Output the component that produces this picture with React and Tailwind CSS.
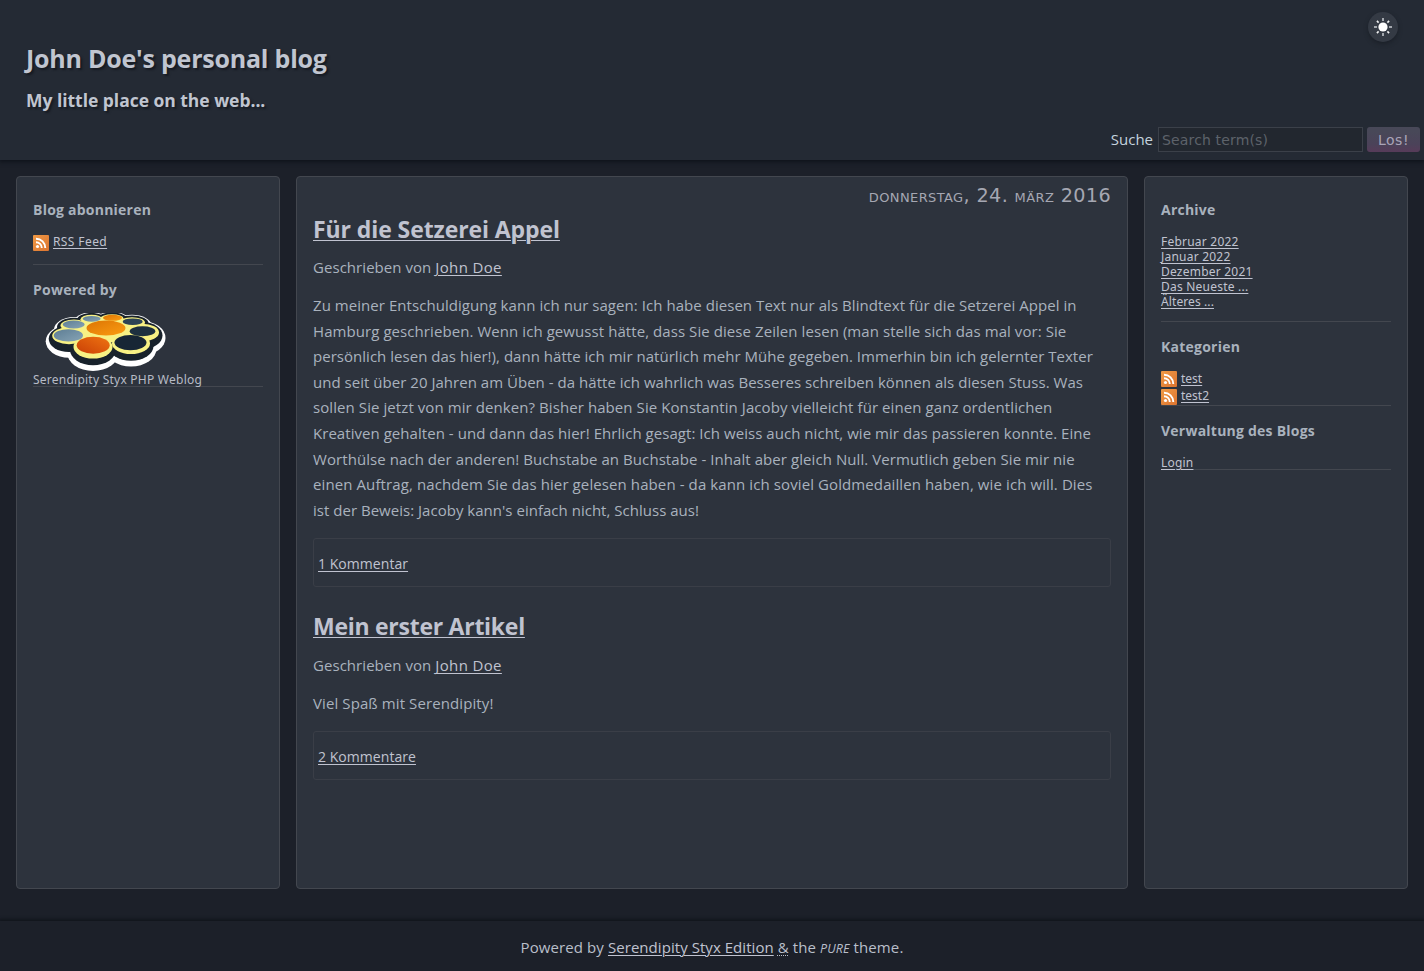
import React from "react";

const bodyFont = "font-['Open_Sans','Noto_Sans',sans-serif]";
const sideFont = "font-['Noto_Sans',sans-serif]";
const uiFont = "font-['DejaVu_Sans',sans-serif]";

function RssIcon() {
  return (
    <svg className="block h-4 w-4 shrink-0" viewBox="0 0 16 16">
      <defs>
        <linearGradient id="rss" x1="0" y1="0" x2="1" y2="1">
          <stop offset="0" stopColor="#f09a45" />
          <stop offset="1" stopColor="#dc7430" />
        </linearGradient>
      </defs>
      <rect width="16" height="16" rx="1" fill="url(#rss)" />
      <circle cx="4.5" cy="11.5" r="1.6" fill="#fff" />
      <path d="M3 7.2a5.8 5.8 0 0 1 5.8 5.8M3 3.7a9.3 9.3 0 0 1 9.3 9.3" fill="none" stroke="#fff" strokeWidth="1.9" />
    </svg>
  );
}

// x, y, rx, ry of each yellow petal, then the depth of the dark edge below it
const petals = [
  [46.5, 6.3, 11, 4.6, 2],
  [67, 5.5, 11.5, 4.2, 2],
  [87, 9.5, 13, 5.2, 3],
  [29, 12.5, 13.5, 6, 4],
  [97.5, 19.5, 16.5, 8.8, 7],
  [24, 22.8, 16.8, 8.5, 7],
  [86, 30.5, 19, 10.5, 6],
  [48, 34, 19.5, 11.5, 6],
];

function StyxLogo() {
  return (
    <svg className="block h-[59px] w-[122px]" viewBox="0 0 122 59">
      <defs>
        <linearGradient id="blue" x1="0" y1="0" x2="1" y2="1">
          <stop offset="0" stopColor="#5d7d94" />
          <stop offset="1" stopColor="#87a4b5" />
        </linearGradient>
        <linearGradient id="orange" x1="0" y1="0" x2="1" y2="1">
          <stop offset="0" stopColor="#dc7404" />
          <stop offset="1" stopColor="#fb9d12" />
        </linearGradient>
        <linearGradient id="red" x1="0" y1="1" x2="1" y2="0">
          <stop offset="0" stopColor="#c93f06" />
          <stop offset="1" stopColor="#ef7411" />
        </linearGradient>
        <clipPath id="logo"><rect width="122" height="59" /></clipPath>
      </defs>
      <g clipPath="url(#logo)">
        <g fill="#fff">
          {petals.map(([x, y, rx, ry, d]) => (
            <ellipse key={x} cx={x} cy={y + (d + 4) / 2} rx={rx + 6.5} ry={ry + (d + 9) / 2} />
          ))}
        </g>
        <g fill="#18222b">
          {petals.map(([x, y, rx, ry, d]) => (
            <ellipse key={x} cx={x} cy={y + (d - 1) / 2} rx={rx + 3.5} ry={ry + (d + 2.6) / 2} />
          ))}
          <ellipse cx="60" cy="26" rx="40" ry="16" />
        </g>
        <g fill="#f7f184">
          {petals.map(([x, y, rx, ry]) => <ellipse key={x} cx={x} cy={y} rx={rx} ry={ry} />)}
          <ellipse cx="62" cy="17" rx="30" ry="12.5" />
        </g>
        <ellipse cx="61" cy="15" rx="19.5" ry="7.6" fill="url(#orange)" />
        <ellipse cx="67.5" cy="4.8" rx="9.5" ry="3" fill="url(#orange)" />
        <ellipse cx="46.7" cy="5.8" rx="9" ry="2.9" fill="url(#blue)" />
        <ellipse cx="28.7" cy="11.5" rx="11" ry="4" fill="url(#blue)" />
        <ellipse cx="23.4" cy="22.4" rx="14.6" ry="6.2" fill="url(#blue)" />
        <ellipse cx="87.7" cy="8.7" rx="10" ry="3.3" fill="#2c4355" />
        <ellipse cx="97.5" cy="18.3" rx="12.8" ry="5" fill="#1d303f" />
        <ellipse cx="85.5" cy="29.6" rx="16" ry="7.6" fill="#172635" />
        <ellipse cx="48.2" cy="32.3" rx="16.5" ry="8.5" fill="url(#red)" />
      </g>
    </svg>
  );
}

function SunIcon() {
  return (
    <svg className="block h-[18px] w-[18px]" viewBox="0 0 18 18">
      <circle cx="9" cy="9" r="4.6" fill="#fff" />
      <path d="M9 0v3M9 15v3M0 9h3M15 9h3" stroke="#a4a8ae" strokeWidth="2" />
      <path d="M2.9 2.9l1.7 1.7M13.4 13.4l1.7 1.7M2.9 15.1l1.7-1.7M13.4 4.6l1.7-1.7" stroke="#f1f2f3" strokeWidth="1.6" />
    </svg>
  );
}

function Link({ children, className = "" }) {
  return (
    <a href="#" className={"text-[#c0c3d0] underline decoration-1 underline-offset-2 " + className} onClick={(e) => e.preventDefault()}>
      {children}
    </a>
  );
}

function Heading({ children, className = "" }) {
  return <h3 className={"h-5 whitespace-nowrap text-[14px] font-bold leading-5 tracking-[0.23px] text-[#a9b2bd] " + className}>{children}</h3>;
}

function Panel({ children, className = "" }) {
  return (
    <div className={"h-[713px] rounded-[4px] border border-[#43474f] bg-[#2d333d] px-4 " + className}>{children}</div>
  );
}

const lines = [
  ["Zu meiner Entschuldigung kann ich nur sagen: Ich habe diesen Text nur als Blindtext für die Setzerei Appel in", "tracking-[0.05px]"],
  ["Hamburg geschrieben. Wenn ich gewusst hätte, dass Sie diese Zeilen lesen (man stelle sich das mal vor: Sie", "tracking-[0.07px]"],
  ["persönlich lesen das hier!), dann hätte ich mir natürlich mehr Mühe gegeben. Immerhin bin ich gelernter Texter", "tracking-[0.027px]"],
  ["und seit über 20 Jahren am Üben - da hätte ich wahrlich was Besseres schreiben können als diesen Stuss. Was", "tracking-[0.027px]"],
  ["sollen Sie jetzt von mir denken? Bisher haben Sie Konstantin Jacoby vielleicht für einen ganz ordentlichen", "tracking-[0.08px]"],
  ["Kreativen gehalten - und dann das hier! Ehrlich gesagt: Ich weiss auch nicht, wie mir das passieren konnte. Eine", "tracking-[0.045px]"],
  ["Worthülse nach der anderen! Buchstabe an Buchstabe - Inhalt aber gleich Null. Vermutlich geben Sie mir nie", "tracking-[0.07px]"],
  ["einen Auftrag, nachdem Sie das hier gelesen haben - da kann ich soviel Goldmedaillen haben, wie ich will. Dies", "tracking-[0.1px]"],
  ["ist der Beweis: Jacoby kann's einfach nicht, Schluss aus!", "tracking-[0.02px]"],
];

export default function App() {
  return (
    <div className={"flex h-[971px] w-[1424px] flex-col overflow-hidden bg-[#1c2029] text-[15px] text-[#a9b2bd] " + bodyFont}>
      <header className="relative flex h-[160px] shrink-0 flex-col bg-[#242a34] pl-[26px] pt-10 shadow-[0_1px_4px_1px_#0f131b]">
        <h1 className="h-9 whitespace-nowrap text-[25px] font-bold leading-9 tracking-[-0.22px] text-[#c0c5d0] [text-shadow:2px_2px_2px_#161a22]">John Doe's personal blog</h1>
        <p className="mt-3 h-6 whitespace-nowrap text-[17.5px] font-bold leading-6 tracking-[-0.03px] text-[#c0c5d0] [text-shadow:2px_2px_2px_#161a22]">My little place on the web...</p>
        <form className="mt-[15px] flex h-[25px] items-start justify-end pr-1" onSubmit={(e) => e.preventDefault()}>
          <label className="mr-[5px] leading-6 text-[#c5d3df]">Suche</label>
          <input
            className={"h-[25px] w-[205px] border border-[#3b4049] bg-[#22272f] px-[3px] text-[14px] tracking-[0.15px] text-gray-300 outline-none placeholder:text-[#5d626a] placeholder:opacity-100 " + uiFont}
            placeholder="Search term(s)"
          />
          <button className={"ml-1 h-[25px] w-[53px] rounded-[3px] bg-linear-to-b from-[#484858] from-20% via-[#4b4259] via-70% to-[#573b59] pt-px text-[14px] tracking-[0.5px] text-[#a9a4b8] " + uiFont}>Los!</button>
        </form>
        <button className="absolute left-[1368px] top-3 flex h-[30px] w-[30px] items-center justify-center rounded-full bg-[#343a44] shadow-[0_2px_4px_#1b2028]">
          <SunIcon />
        </button>
      </header>

      <div className="mt-4 flex shrink-0 gap-4 px-4">
        <Panel className="w-[264px] pt-[23px]">
          <Heading>Blog abonnieren</Heading>
          <div className={"mt-[15px] flex h-[29px] gap-1 text-[12px] leading-[14px] tracking-[0.4px] " + sideFont}>
            <RssIcon />
            <Link>RSS Feed</Link>
          </div>
          <hr className="border-[#43474f]" />
          <Heading className="mt-[15px]">Powered by</Heading>
          <div className="ml-3 mt-[13px]"><StyxLogo /></div>
          <div className={"h-[14px] whitespace-nowrap text-[12px] leading-4 tracking-[0.24px] text-[#b7bbc5] " + sideFont}>Serendipity Styx PHP Weblog</div>
          <hr className="border-[#43474f]" />
        </Panel>

        <Panel className="w-[832px] pt-[7px]">
          <div className={"h-6 whitespace-nowrap text-right text-[19.2px] leading-6 tracking-[0.38px] text-[#a5a7b2] [font-variant:small-caps] " + uiFont}>donnerstag, 24. märz 2016</div>
          <h2 className="mt-[5px] h-8 whitespace-nowrap text-[23px] font-bold leading-8 tracking-[-0.09px]"><Link>Für die Setzerei Appel</Link></h2>
          <p className="mt-[9px] h-[26px] leading-[26px] tracking-[0.05px]">Geschrieben von <Link className="tracking-[0.36px]">John Doe</Link></p>
          <div className="mt-[13px] text-[15px] leading-[25.6px]">
            {lines.map(([text, tracking]) => (
              <div key={text} className="whitespace-nowrap"><span className={tracking}>{text}</span></div>
            ))}
          </div>
          <div className="mt-[15px] flex h-[49px] items-center rounded-[3px] border border-[#3a3e47] px-1 pt-[2px] text-[14px] tracking-[0.05px]"><Link>1 Kommentar</Link></div>
          <h2 className="mt-[23px] h-8 whitespace-nowrap text-[23px] font-bold leading-8 tracking-[-0.27px]"><Link>Mein erster Artikel</Link></h2>
          <p className="mt-2.5 h-[26px] leading-[26px] tracking-[0.05px]">Geschrieben von <Link className="tracking-[0.36px]">John Doe</Link></p>
          <p className="mt-3 h-[26px] leading-[26px] tracking-[0.1px]">Viel Spaß mit Serendipity!</p>
          <div className="mt-[15px] flex h-[49px] items-center rounded-[3px] border border-[#3a3e47] px-1 pt-[2px] text-[14px] tracking-[0.05px]"><Link>2 Kommentare</Link></div>
        </Panel>

        <Panel className="w-[264px] pt-[23px]">
          <Heading>Archive</Heading>
          <ul className={"mt-[14px] h-[87px] text-[12px] leading-[15px] tracking-[0.22px] " + sideFont}>
            <li><Link>Februar 2022</Link></li>
            <li><Link>Januar 2022</Link></li>
            <li><Link>Dezember 2021</Link></li>
            <li><Link>Das Neueste ...</Link></li>
            <li><Link className="tracking-[0.1px]">Älteres ...</Link></li>
          </ul>
          <hr className="border-[#43474f]" />
          <Heading className="mt-[15px]">Kategorien</Heading>
          <ul className={"mt-[14px] h-[34px] text-[12px] leading-[15px] " + sideFont}>
            <li className="flex h-[18px] gap-1"><RssIcon /><Link>test</Link></li>
            <li className="flex h-4 gap-1 leading-[13px]"><RssIcon /><Link>test2</Link></li>
          </ul>
          <hr className="border-[#43474f]" />
          <Heading className="mt-[15px]">Verwaltung des Blogs</Heading>
          <div className={"mt-[14px] h-[14px] text-[12px] leading-[15px] tracking-[0.2px] " + sideFont}><Link>Login</Link></div>
          <hr className="border-[#43474f]" />
        </Panel>
      </div>

      <footer className="mt-8 h-[50px] shrink-0 whitespace-nowrap bg-[#1c2029] pt-[13px] text-center leading-[26px] tracking-[0.1px] text-[#b9bfca] shadow-[0_-1px_3px_1px_#11151c]">
        Powered by <Link className="tracking-[0.05px]">Serendipity Styx Edition</Link> <span className="underline decoration-dotted decoration-1 underline-offset-2">&amp;</span> the <em className="text-[12.5px]">PURE</em> theme.
      </footer>
    </div>
  );
}
